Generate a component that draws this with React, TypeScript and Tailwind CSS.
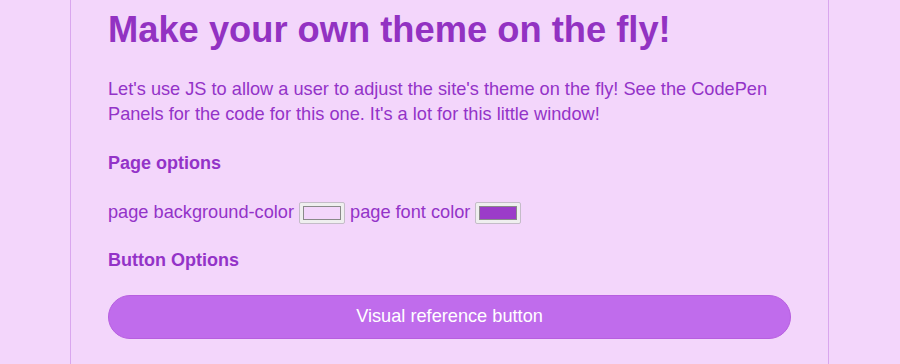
import React from 'react';

const ColorSwatch = ({ color }: { color: string }) => (
    <span className="inline-flex items-center justify-center w-[46px] h-[22px] bg-[#efefef] border border-[#c4bcc8] rounded-[2px] align-middle p-[3px]">
        <span className="block w-full h-full border border-[#8a8a8a]" style={{ backgroundColor: color }} />
    </span>
);

const App = () => {
    return (
        <div className="w-full h-[364px] overflow-hidden bg-[#f3d6fb] text-[#9333c8] font-['Liberation_Sans',Arial,sans-serif]">
            <div className="ml-[70px] w-[759px] h-full border-x border-[#d9a6ee] px-[37px]">
                <h1 className="text-[36.3px] font-bold leading-[42px] pt-[9px] text-[#9232c2]">
                    Make your own theme on the fly!
                </h1>

                <p className="text-[18.2px] leading-[25px] mt-[26px]">
                    Let's use JS to allow a user to adjust the site's theme on the fly! See the CodePen Panels for the code for this one. It's a lot for this little window!
                </p>

                <h3 className="text-[18px] font-bold mt-[24px] leading-[25px]">Page options</h3>

                <div className="text-[18.2px] leading-[25px] mt-[24px] flex items-center gap-[5px]">
                    <span>page background-color</span>
                    <ColorSwatch color="#f3d6fb" />
                    <span>page font color</span>
                    <ColorSwatch color="#9b3cc9" />
                </div>

                <h3 className="text-[18px] font-bold mt-[23px] leading-[25px]">Button Options</h3>

                <button className="mt-[22px] w-full h-[44px] rounded-full bg-[#c06cec] border border-[#b75fe0] text-white text-[18.2px]">
                    Visual reference button
                </button>
            </div>
        </div>
    );
};

export default App;
